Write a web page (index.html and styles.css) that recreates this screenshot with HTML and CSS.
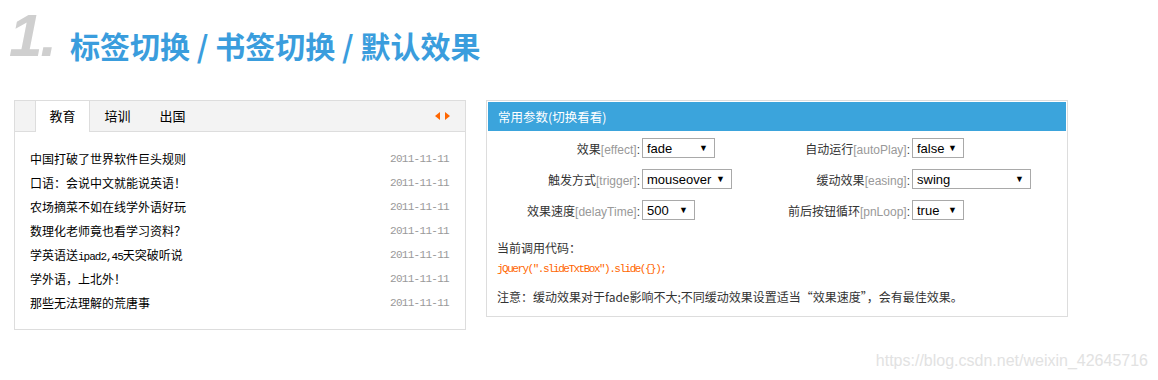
FILE: index.html
```html
<!DOCTYPE html>
<html lang="zh">
<head>
<meta charset="utf-8">
<title>标签切换</title>
<link rel="stylesheet" href="styles.css">
</head>
<body>
<div class="page">
  <h1 class="title"><span class="num">1.</span><span class="text">标签切换 / 书签切换 / 默认效果</span></h1>
  <div class="main">
    <div class="slideTxtBox">
      <div class="hd">
        <ul class="tabs">
          <li class="on">教育</li>
          <li>培训</li>
          <li>出国</li>
        </ul>
        <div class="arrows"><span class="prev"></span><span class="next"></span></div>
      </div>
      <ul class="list">
        <li><span class="t">中国打破了世界软件巨头规则</span><span class="d">2011-11-11</span></li>
        <li><span class="t">口语：会说中文就能说英语！</span><span class="d">2011-11-11</span></li>
        <li><span class="t">农场摘菜不如在线学外语好玩</span><span class="d">2011-11-11</span></li>
        <li><span class="t">数理化老师竟也看学习资料？</span><span class="d">2011-11-11</span></li>
        <li><span class="t">学英语送<span class="m">ipad2,45</span>天突破听说</span><span class="d">2011-11-11</span></li>
        <li><span class="t">学外语，上北外！</span><span class="d">2011-11-11</span></li>
        <li><span class="t">那些无法理解的荒唐事</span><span class="d">2011-11-11</span></li>
      </ul>
    </div>
    <div class="params">
      <div class="phd">常用参数(切换看看)</div>
      <div class="grid">
        <label class="lb">效果<em>[effect]</em>:</label>
        <span class="sel w73"><span>fade</span><i>▼</i></span>
        <label class="lb">自动运行<em>[autoPlay]</em>:</label>
        <span class="sel w52"><span>false</span><i>▼</i></span>

        <label class="lb">触发方式<em>[trigger]</em>:</label>
        <span class="sel w90"><span>mouseover</span><i>▼</i></span>
        <label class="lb">缓动效果<em>[easing]</em>:</label>
        <span class="sel w119"><span>swing</span><i>▼</i></span>

        <label class="lb">效果速度<em>[delayTime]</em>:</label>
        <span class="sel w53"><span>500</span><i>▼</i></span>
        <label class="lb">前后按钮循环<em>[pnLoop]</em>:</label>
        <span class="sel w52"><span>true</span><i>▼</i></span>
      </div>
      <div class="code">
        <p class="cap">当前调用代码：</p>
        <p class="js">jQuery(".slideTxtBox").slide({});</p>
      </div>
      <p class="note">注意：缓动效果对于fade影响不大;不同缓动效果设置适当“效果速度”，会有最佳效果。</p>
    </div>
  </div>
  <div class="watermark">https://blog.csdn.net/weixin_42645716</div>
</div>
</body>
</html>
```

FILE: styles.css
```css
* { box-sizing: border-box; }
html, body { margin: 0; padding: 0; background: #fff; }
body {
  font-family: "Liberation Sans", Arial, "Noto Sans CJK SC", sans-serif;
  font-size: 12px;
  color: #333;
}
.page {
  position: relative;
  width: 1158px;
  height: 380px;
  padding: 6px 0 0 14px;
}
.title {
  margin: 0;
  height: 94px;
  display: flex;
  align-items: baseline;
  font-weight: bold;
  line-height: 1;
}
.title .num {
  font-family: "Liberation Sans", Arial, sans-serif;
  font-style: italic;
  font-size: 60px;
  color: #cfcfcf;
  letter-spacing: -2px;
  margin-left: -5px;
  width: 61px;
}
.title .text {
  font-family: "Noto Sans CJK SC", sans-serif;
  font-size: 30px;
  color: #3a9ddd;
  position: relative;
  top: 2px;
}
.main {
  display: flex;
  align-items: flex-start;
  gap: 20px;
}
/* left tab box */
.slideTxtBox {
  width: 452px;
  border: 1px solid #ddd;
}
.hd {
  height: 31px;
  background: #f3f3f3;
  border-bottom: 1px solid #ddd;
  display: flex;
  justify-content: space-between;
  align-items: flex-start;
  padding: 0 15px 0 20px;
}
.tabs {
  list-style: none;
  margin: 0;
  padding: 0;
  display: flex;
}
.tabs li {
  width: 55px;
  height: 31px;
  line-height: 29px;
  text-align: center;
  font-family: "Noto Sans CJK SC", sans-serif;
  font-size: 13px;
  color: #000;
  border-left: 1px solid transparent;
  border-right: 1px solid transparent;
}
.tabs li.on {
  background: #fff;
  border-color: #ddd;
}
.arrows {
  display: flex;
  gap: 5px;
  margin-top: 11px;
}
.arrows span {
  width: 0;
  height: 0;
  border-top: 4.5px solid transparent;
  border-bottom: 4.5px solid transparent;
}
.arrows .prev { border-right: 5px solid #ff6600; }
.arrows .next { border-left: 5px solid #ff6600; }
.list {
  list-style: none;
  margin: 0;
  padding: 15px 16px 14px 15px;
}
.list li {
  height: 24px;
  line-height: 24px;
  display: flex;
  justify-content: space-between;
}
.list .t {
  font-family: "Noto Sans CJK SC", sans-serif;
  font-size: 12px;
  color: #000;
}
.list .m {
  font-family: "Liberation Mono", monospace;
  font-size: 11px;
  letter-spacing: -1px;
}
.list .d {
  font-family: "Liberation Mono", monospace;
  font-size: 11px;
  letter-spacing: -0.7px;
  color: #999;
}
/* right params box */
.params {
  width: 582px;
  border: 1px solid #ddd;
  padding: 1px 1px 10px 1px;
}
.phd {
  height: 29px;
  line-height: 29px;
  background: #3ba4dc;
  color: #fff;
  font-family: "Noto Sans CJK SC", sans-serif;
  font-size: 12.5px;
  padding-left: 10px;
}
.grid {
  display: grid;
  grid-template-columns: 154px 115px 155px auto;
  row-gap: 11px;
  padding-top: 7px;
  align-items: center;
}
.lb {
  text-align: right;
  padding-right: 2px;
  font-family: "Liberation Sans", Arial, "Noto Sans CJK SC", sans-serif;
  font-size: 12px;
  color: #333;
}
.lb em { font-style: normal; color: #999; }
.sel {
  height: 20px;
  border: 1px solid #a9a9a9;
  background: #fff;
  display: flex;
  justify-content: space-between;
  align-items: center;
  padding: 0 6px 0 4px;
  font-family: "Liberation Sans", Arial, sans-serif;
  font-size: 13px;
  color: #000;
}
.sel i { font-style: normal; font-size: 9px; }
.w73 { width: 73px; }
.w90 { width: 90px; }
.w53 { width: 53px; }
.w52 { width: 52px; }
.w119 { width: 119px; }
.code { padding: 18px 0 0 9px; }
.code p { margin: 0; }
.cap {
  font-family: "Noto Sans CJK SC", sans-serif;
  font-size: 12px;
  line-height: 20px;
  color: #333;
}
.js {
  font-family: "Liberation Mono", monospace;
  font-size: 11px;
  letter-spacing: -1.5px;
  line-height: 22px;
  color: #ff6600;
}
.note {
  margin: 8px 0 0 9px;
  font-family: "Noto Sans CJK SC", sans-serif;
  font-size: 12px;
  line-height: 18px;
  color: #333;
}
.watermark {
  position: absolute;
  right: 10px;
  bottom: 10px;
  font-family: "Liberation Sans", Arial, sans-serif;
  font-size: 16px;
  color: #e2e2e2;
}
```
